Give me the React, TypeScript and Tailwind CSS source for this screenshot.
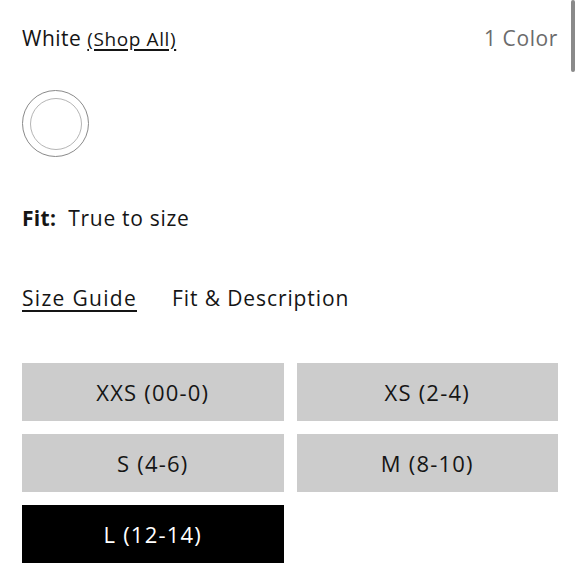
import React from "react";

const sizes = [
  { label: "XXS (00-0)", selected: false },
  { label: "XS (2-4)", selected: false },
  { label: "S (4-6)", selected: false },
  { label: "M (8-10)", selected: false },
  { label: "L (12-14)", selected: true },
];

export default function App() {
  return (
    <div
      className="relative w-[580px] h-[580px] overflow-hidden bg-white text-[#151515]"
      style={{ fontFamily: "'Open Sans', sans-serif" }}
    >
      <div className="absolute left-[571px] top-0 w-[4px] h-[72px] rounded-full bg-[#8a8a8a]" />
      <div className="px-[22px] pt-[24px]">
        <div className="flex items-center justify-between h-[28px] leading-[28px]">
          <div className="text-[21px] tracking-[0.5px]">
            White{" "}
            <span className="text-[19px] tracking-[0.6px] underline decoration-[1.5px] underline-offset-[3px]">
              (Shop All)
            </span>
          </div>
          <div className="text-[21px] tracking-[0.6px] text-[#6b6b6b]">1 Color</div>
        </div>
        <div className="mt-[38px] w-[67px] h-[67px] rounded-full border-[1.5px] border-[#8a8a8a] flex items-center justify-center">
          <div className="w-[52px] h-[52px] rounded-full border-[1.5px] border-[#b5b5b5]" />
        </div>
        <div className="mt-[47px] text-[21px] flex items-center h-[28px] leading-[28px]">
          <span className="font-bold tracking-[0.3px]">Fit:</span>
          <span className="ml-[12px] tracking-[0.7px]">True to size</span>
        </div>
        <div className="mt-[52px] flex items-center text-[21px] h-[28px] leading-[28px]">
          <span className="underline decoration-[1.5px] underline-offset-[4px] tracking-[1.3px]">Size Guide</span>
          <span className="ml-[35px] tracking-[0.9px]">Fit &amp; Description</span>
        </div>
        <div className="mt-[51px] grid grid-cols-2 gap-x-[13px] gap-y-[13px]">
          {sizes.map((s) => (
            <div
              key={s.label}
              className={
                "h-[58px] flex items-center justify-center text-[22px] tracking-[1.2px] " +
                (s.selected ? "bg-black text-white" : "bg-[#cccccc] text-[#151515]")
              }
            >
              {s.label}
            </div>
          ))}
        </div>
      </div>
    </div>
  );
}
